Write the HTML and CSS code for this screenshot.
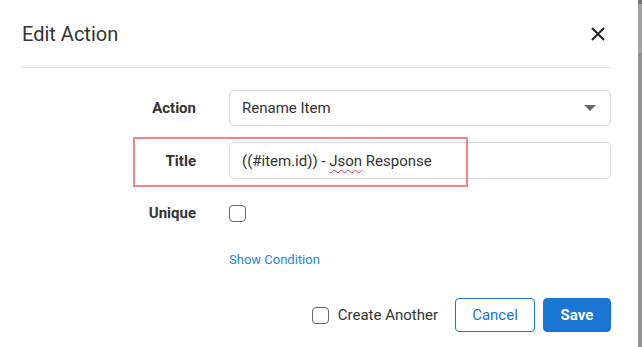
FILE: index.html
```html
<!DOCTYPE html>
<html lang="en">
<head>
    <meta charset="UTF-8">
    <title>Edit Action</title>
    <link rel="stylesheet" href="styles.css">
</head>
<body>
    <div class="page">
        <div class="dialog">
            <div class="dialog-header">
                <h1>Edit Action</h1>
                <button class="close" aria-label="Close">
                    <svg width="14" height="14" viewBox="0 0 14 14"><path d="M1 1L13 13M13 1L1 13" stroke="#222" stroke-width="2"/></svg>
                </button>
            </div>

            <div class="form">
                <label class="label">Action</label>
                <div class="field select">
                    <span>Rename Item</span>
                    <span class="caret"></span>
                </div>

                <label class="label">Title</label>
                <div class="field"><span>((#item.id)) - <span class="misspelled">Json</span> Response</span></div>

                <label class="label">Unique</label>
                <div class="check-cell"><span class="checkbox"></span></div>

                <div></div>
                <a class="link" href="#">Show Condition</a>
            </div>

            <div class="footer">
                <label class="another"><span class="checkbox"></span>Create Another</label>
                <button class="btn btn-outline">Cancel</button>
                <button class="btn btn-primary">Save</button>
            </div>

            <!-- marcador rojo de la captura -->
            <div class="highlight"></div>
        </div>
        <div class="scroll-strip">
            <div class="strip-top"></div>
        </div>
    </div>
</body>
</html>
```

FILE: styles.css
```css
* {
    box-sizing: border-box;
}
body {
    margin: 0;
    font-family: Roboto, "Liberation Sans", Arial, sans-serif;
    color: #333;
    background: #fff;
}
.page {
    display: flex;
    height: 347px;
    overflow: hidden;
}
.dialog {
    position: relative;
    width: 638px;
    padding: 0 27px 0 22px;
    background: #fff;
}
.dialog-header {
    display: flex;
    align-items: center;
    justify-content: space-between;
    height: 68px;
    border-bottom: 1px solid #e2e2e2;
}
.dialog-header h1 {
    margin: 0;
    font-size: 20px;
    font-weight: 400;
    color: #333;
}
.close {
    border: none;
    background: none;
    padding: 0;
    margin-right: 6px;
    width: 14px;
    height: 14px;
    display: flex;
    cursor: pointer;
}
.form {
    display: grid;
    grid-template-columns: 174px 1fr;
    column-gap: 33px;
    row-gap: 16px;
    align-items: center;
    padding-top: 22px;
}
.label {
    text-align: right;
    font-size: 15px;
    font-weight: 700;
    color: #333;
}
.field {
    height: 37px;
    border: 1px solid #dcdcdc;
    border-radius: 5px;
    padding: 0 12px;
    display: flex;
    align-items: center;
    font-size: 15px;
    color: #333;
}
.select {
    justify-content: space-between;
    height: 36px;
}
.caret {
    width: 0;
    height: 0;
    border-left: 6px solid transparent;
    border-right: 6px solid transparent;
    border-top: 6px solid #666;
    margin-right: 2px;
}
.misspelled {
    text-decoration: underline wavy #e53935;
    text-decoration-thickness: 1px;
    text-underline-offset: 3px;
}
.check-cell {
    height: 36px;
    display: flex;
    align-items: center;
}
.checkbox {
    display: inline-block;
    width: 17px;
    height: 17px;
    border: 1px solid #666;
    border-radius: 4px;
    background: #fff;
}
.link {
    margin-top: 5px;
    font-size: 13px;
    color: #1e88e5;
    text-decoration: none;
}
.footer {
    display: flex;
    justify-content: flex-end;
    align-items: center;
    gap: 8px;
    margin-top: 31px;
}
.another {
    display: flex;
    align-items: center;
    gap: 9px;
    font-size: 15px;
    color: #333;
    margin-right: 9px;
}
.btn {
    height: 34px;
    border-radius: 4px;
    font-family: inherit;
    font-size: 15px;
    padding: 0 16px;
    cursor: pointer;
}
.btn-outline {
    width: 80px;
    background: #fff;
    border: 1px solid #1976d2;
    color: #1976d2;
}
.btn-primary {
    width: 68px;
    background: #1976d2;
    border: 1px solid #1976d2;
    color: #fff;
    font-weight: 700;
}
.highlight {
    position: absolute;
    left: 133px;
    top: 137px;
    width: 335px;
    height: 50px;
    border: 2px solid #ef8585;
}
.scroll-strip {
    width: 4px;
    height: 347px;
    background: #8e9296;
}
.strip-top {
    height: 53px;
    background: #a3a3a3;
    border-top: 4px solid #777;
}
```
